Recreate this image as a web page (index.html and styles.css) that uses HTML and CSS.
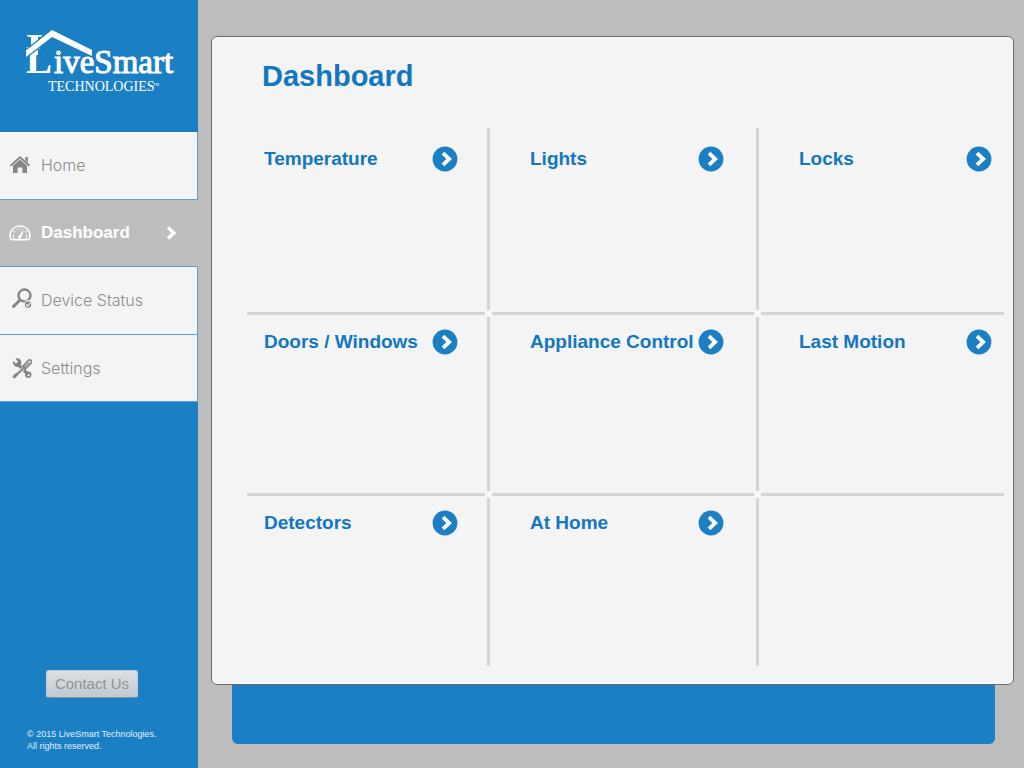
FILE: index.html
```html
<!DOCTYPE html>
<html lang="en">
<head>
<meta charset="utf-8">
<meta name="viewport" content="width=device-width, initial-scale=1">
<title>LiveSmart Technologies – Dashboard</title>
<link rel="stylesheet" href="styles.css">
</head>
<body>
<svg class="symbols" aria-hidden="true">
  <symbol id="go" viewBox="0 0 26 26">
    <circle cx="13" cy="13" r="12.4" fill="#1b7fc4"/>
    <path d="M11 7.2 17.2 13 11 18.8" fill="none" stroke="#fff" stroke-width="3.8"/>
  </symbol>
</svg>
<div class="app">
  <aside class="sidebar">
    <a class="logo" href="#" aria-label="LiveSmart Technologies">
      <svg width="160" height="72" viewBox="22 26 160 72">
        <path d="M27 35h15v1.200l-4 1V55h-7V37.200l-4-1z" fill="#fff"/>
        <text class="logo-initial" x="26" y="73">L</text>
        <text class="logo-name" x="54" y="73">iveSmart</text>
        <path d="M26 50.500 52 30 92 50v6L52 37 26 57z" fill="#fff" stroke="#1b7fc4" stroke-width="2.400" paint-order="stroke"/>
        <text class="logo-sub" x="48" y="91">TECHNOLOGIES</text>
        <text class="logo-tm" x="153" y="86">TM</text>
      </svg>
    </a>
    <nav class="nav">
      <a class="nav-item" href="#">
        <svg class="icon" viewBox="0 0 24 24"><path d="M2.500 12.800 12 4.300l9.500 8.500" fill="none" stroke="#858688" stroke-width="1.900"/><path d="M17.300 4h2.500v5.500l-2.500-2.200zM5 12.700l7-6.200 7 6.200V20h-4.600v-5.500H9.600V20H5z" fill="#858688"/></svg>
        <span class="nav-label">Home</span>
      </a>
      <a class="nav-item active" href="#" aria-current="page">
        <svg class="icon" viewBox="0 0 24 24"><path d="M3.300 18.700Q2 16.800 2 14.200a10 9.200 0 0 1 20 0q0 2.600-1.300 4.500z" fill="none" stroke="#fff" stroke-width="1.500" stroke-linejoin="round"/><path d="m15.800 8.200-2.200 7.500a1.800 1.800 0 1 1-2.500-1.200z" fill="#fff"/><path d="M4.500 14.500h1.600M5.800 10.400l1.300.9M9.200 7.800l.6 1.300M13 7.200v1.400M18.500 10.400l-1.300.9M18 14.500h1.600M5.300 17h1.200M17.500 17h1.200" stroke="#fff" stroke-width="1.300"/></svg>
        <span class="nav-label">Dashboard</span>
        <svg class="chevron" viewBox="0 0 12 16"><path d="M2 2.500 7.800 8 2 13.500" fill="none" stroke="#fff" stroke-width="3.600"/></svg>
      </a>
      <a class="nav-item" href="#">
        <svg class="icon" viewBox="-2 1 24 24"><circle cx="14.500" cy="8.500" r="6" fill="none" stroke="#858688" stroke-width="2.400"/><path d="m9.800 13.200-6.200 6.200" stroke="#858688" stroke-width="3" stroke-linecap="round"/><circle cx="18" cy="17.500" r="3.800" fill="#858688" stroke="#f4f4f4" stroke-width="1.200"/><path d="m16 17.300 1.600 1.800 2.800-3.200" fill="none" stroke="#f4f4f4" stroke-width="1.200"/></svg>
        <span class="nav-label">Device Status</span>
      </a>
      <a class="nav-item" href="#">
        <svg class="icon" viewBox="-2 0 24 24"><path d="m8 8.500 9.800 9.700" stroke="#858688" stroke-width="3.200"/><path d="M3.200 4.900 6 7.500l2-2-2.700-2.900c3-1 6.400.9 6 4.500-.2 3.300-3.500 4.700-5.800 3.500C3.300 9.400 2.500 7 3.200 4.900z" fill="#858688"/><circle cx="18.300" cy="18.800" r="3.200" fill="#858688"/><circle cx="18.700" cy="19.200" r="1.100" fill="#f4f4f4"/><path d="m13 10 5.200-5.500a1.900 1.900 0 0 1 2.800 2.700L15.500 12.800z" fill="#f4f4f4" stroke="#858688" stroke-width="1.700"/><path d="m14.500 11 4.500-4.700" stroke="#858688" stroke-width="1.200"/><path d="m13 12.500-6 6" stroke="#f4f4f4" stroke-width="3.600"/><path d="m13.500 12-7 7" stroke="#858688" stroke-width="2.100"/><path d="m7.200 17-3 1.800L3 21.200l.8.800 2.400-1.200 1.800-3z" fill="#858688" stroke="#858688"/></svg>
        <span class="nav-label">Settings</span>
      </a>
    </nav>
    <div class="sidebar-foot">
      <button class="contact" type="button">Contact Us</button>
      <p class="copyright">© 2015 LiveSmart Technologies.<br>All rights reserved.</p>
    </div>
  </aside>
  <main class="main">
    <section class="panel">
      <h1 class="title">Dashboard</h1>
      <div class="tiles">
        <div class="tile"><a class="tile-link" href="#"><span>Temperature</span><svg class="go"><use href="#go"/></svg></a></div>
        <div class="tile"><a class="tile-link" href="#"><span>Lights</span><svg class="go"><use href="#go"/></svg></a></div>
        <div class="tile"><a class="tile-link" href="#"><span>Locks</span><svg class="go"><use href="#go"/></svg></a></div>
        <div class="tile"><a class="tile-link" href="#"><span>Doors / Windows</span><svg class="go"><use href="#go"/></svg></a></div>
        <div class="tile"><a class="tile-link" href="#"><span>Appliance Control</span><svg class="go"><use href="#go"/></svg></a></div>
        <div class="tile"><a class="tile-link" href="#"><span>Last Motion</span><svg class="go"><use href="#go"/></svg></a></div>
        <div class="tile"><a class="tile-link" href="#"><span>Detectors</span><svg class="go"><use href="#go"/></svg></a></div>
        <div class="tile"><a class="tile-link" href="#"><span>At Home</span><svg class="go"><use href="#go"/></svg></a></div>
        <div class="tile"></div>
      </div>
    </section>
    <div class="status-bar"></div>
  </main>
</div>
</body>
</html>
```
FILE: styles.css
```css
:root {
  --blue: #1b7fc4;
  --ink: #1277c0;
  --grey: #bdbdbd;
  --paper: #f4f4f4;
  --rule: #d5d5d5;
}
* { box-sizing: border-box; }
body {
  margin: 0;
  background: var(--grey);
  font-family: "Liberation Sans", Arial, sans-serif;
}
a { color: inherit; text-decoration: none; }
.symbols { display: none; }
.app { display: flex; min-height: 100vh; }

.sidebar {
  flex: 0 0 198px;
  display: flex;
  flex-direction: column;
  background: var(--blue);
}
.logo { display: block; height: 132px; padding: 26px 0 0 22px; }
.logo svg { display: block; }
.logo text { font-family: "Liberation Serif", "Times New Roman", serif; fill: #fff; stroke: #fff; }
.logo-initial { font-size: 39px; font-weight: 700; stroke-width: 0; }
.logo-name { font-size: 33px; stroke-width: 1px; }
.logo .logo-sub { font-size: 14px; stroke: none; }
.logo .logo-tm { font-size: 4px; stroke: none; }

.nav { display: flex; flex-direction: column; height: 270px; }
.nav-item {
  flex: 1;
  display: flex;
  align-items: center;
  gap: 9px;
  padding: 0 19px 0 8px;
  background: var(--paper);
  border: solid #5ba3d6;
  border-width: 0 1px 1px 0;
  color: #8c8c8f;
  font-family: Inter, "Liberation Sans", sans-serif;
  font-size: 16px;
  font-weight: 300;
}
.nav-item.active {
  background: var(--grey);
  border-right-color: var(--grey);
  color: #fff;
  font-family: "Liberation Sans", Arial, sans-serif;
  font-size: 17px;
  font-weight: 700;
}
.nav-label { flex: 1; }
.icon { flex: none; width: 24px; height: 24px; }
.chevron { flex: none; width: 12px; height: 16px; }

.sidebar-foot { margin-top: auto; padding: 0 0 16px 27px; }
.contact {
  margin: 0 0 30px 19px;
  width: 92px;
  height: 28px;
  padding: 0 0 1px;
  border: 1px solid #c3ccd4;
  border-bottom-color: #8593a0;
  border-radius: 3px;
  background: linear-gradient(#dde0e4, #c0c9d1);
  color: #929294;
  font: 15px "Liberation Sans", Arial, sans-serif;
}
.copyright {
  margin: 0;
  color: #e3f0fa;
  font-size: 9px;
  line-height: 12px;
}

.main {
  flex: 1;
  display: flex;
  flex-direction: column;
  min-width: 0;
  padding: 36px 10px 24px 13px;
}
.panel {
  flex: 1;
  display: flex;
  flex-direction: column;
  padding: 22px 9px 18px 35px;
  background: var(--paper);
  border: 1px solid #6c6c6c;
  border-radius: 6px;
}
.title {
  margin: 0 0 35px 15px;
  color: var(--ink);
  font-size: 29px;
  line-height: 34px;
}
.tiles {
  flex: 1;
  display: grid;
  grid-template-columns: 243fr 269fr 245fr;
  grid-template-rows: 187fr 182fr 170fr;
}
.tile {
  position: relative;
  padding: 14px 32px 0 40px;
  border: solid var(--rule);
  border-width: 0 3px 3px 0;
}
.tile:nth-child(-n+3) { padding-top: 18px; }
.tile:nth-child(3n+1) { padding-right: 29px; padding-left: 17px; }
.tile:nth-child(3n) { padding-right: 12px; border-right: 0; }
.tile:nth-child(n+7) { border-bottom: 0; }
/* Notch that breaks the rules where they cross */
.tile:nth-child(1)::after,
.tile:nth-child(2)::after,
.tile:nth-child(4)::after,
.tile:nth-child(5)::after {
  content: "";
  position: absolute;
  right: -5px;
  bottom: -5px;
  z-index: 1;
  width: 7px;
  height: 7px;
  border-radius: 50%;
  background: #fafafa;
}
.tile-link {
  display: flex;
  align-items: center;
  justify-content: space-between;
  color: var(--ink);
  font-size: 19px;
  font-weight: 700;
  white-space: nowrap;
}
.go { flex: none; width: 26px; height: 26px; }
.status-bar {
  height: 59px;
  margin: 0 19px 0 21px;
  background: var(--blue);
  border-radius: 0 0 6px 6px;
}
```
